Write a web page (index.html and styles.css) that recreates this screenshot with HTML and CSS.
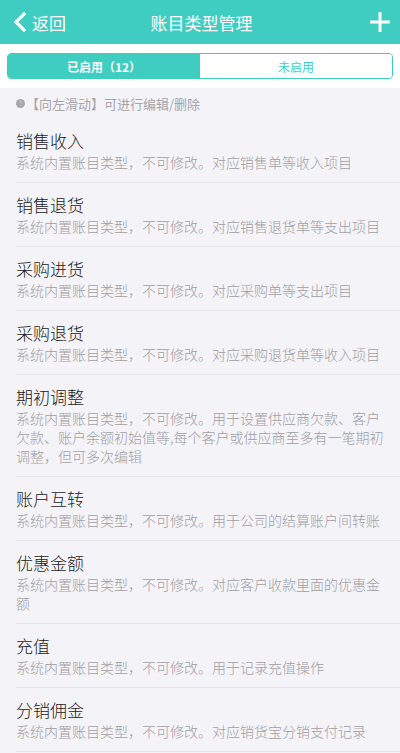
FILE: index.html
```html
<!DOCTYPE html>
<html lang="zh-CN">
<head>
    <meta charset="UTF-8">
    <meta name="viewport" content="width=device-width, initial-scale=1.0">
    <title>账目类型管理</title>
    <link rel="stylesheet" href="styles.css">
</head>
<body>
    <div class="topo">
        <div class="voltar">
            <svg width="14" height="20" viewBox="0 0 14 20"><path d="M11 2 L3 10 L11 18" fill="none" stroke="#fff" stroke-width="3.2" stroke-linecap="square"/></svg>
            <span>返回</span>
        </div>
        <div class="titulo">账目类型管理</div>
        <div class="mais">
            <svg width="20" height="20" viewBox="0 0 20 20"><path d="M10 0 V20 M0 10 H20" stroke="#fff" stroke-width="3"/></svg>
        </div>
    </div>

    <div class="abas-area">
        <div class="abas">
            <div class="aba ativa">已启用（12）</div>
            <div class="aba">未启用</div>
        </div>
    </div>

    <div class="dica">
        <span class="bolinha">?</span>
        <span>【向左滑动】可进行编辑/删除</span>
    </div>

    <div class="lista">
        <div class="item">
            <div class="nome">销售收入</div>
            <div class="desc">系统内置账目类型，不可修改。对应销售单等收入项目</div>
        </div>
        <div class="item">
            <div class="nome">销售退货</div>
            <div class="desc">系统内置账目类型，不可修改。对应销售退货单等支出项目</div>
        </div>
        <div class="item">
            <div class="nome">采购进货</div>
            <div class="desc">系统内置账目类型，不可修改。对应采购单等支出项目</div>
        </div>
        <div class="item">
            <div class="nome">采购退货</div>
            <div class="desc">系统内置账目类型，不可修改。对应采购退货单等收入项目</div>
        </div>
        <div class="item">
            <div class="nome">期初调整</div>
            <div class="desc">系统内置账目类型，不可修改。用于设置供应商欠款、客户欠款、账户余额初始值等,每个客户或供应商至多有一笔期初调整，但可多次编辑</div>
        </div>
        <div class="item">
            <div class="nome">账户互转</div>
            <div class="desc">系统内置账目类型，不可修改。用于公司的结算账户间转账</div>
        </div>
        <div class="item">
            <div class="nome">优惠金额</div>
            <div class="desc">系统内置账目类型，不可修改。对应客户收款里面的优惠金额</div>
        </div>
        <div class="item">
            <div class="nome">充值</div>
            <div class="desc">系统内置账目类型，不可修改。用于记录充值操作</div>
        </div>
        <div class="item">
            <div class="nome">分销佣金</div>
            <div class="desc">系统内置账目类型，不可修改。对应销货宝分销支付记录</div>
        </div>
    </div>
</body>
</html>
```

FILE: styles.css
```css
body {
    margin: 0;
    padding: 0;
    font-family: "Noto Sans CJK SC", "Liberation Sans", sans-serif;
    background: #f4f3f8;
}

/* barra do topo */
.topo {
    height: 44px;
    background: #3ecdc0;
    display: flex;
    align-items: center;
    justify-content: space-between;
    padding: 0 10px 0 13px;
    color: #fff;
}

.voltar {
    display: flex;
    align-items: center;
    gap: 5px;
    width: 80px;
    font-size: 17px;
}

.voltar svg {
    display: block;
}

.titulo {
    font-size: 17px;
}

.mais {
    width: 80px;
    display: flex;
    justify-content: flex-end;
}

.mais svg {
    display: block;
}

/* abas */
.abas-area {
    background: #fff;
    height: 44px;
    padding: 9px 7px 0 7px;
    box-sizing: border-box;
}

.abas {
    display: flex;
    height: 26px;
    border: 1px solid #3ecdc0;
    border-radius: 4px;
    overflow: hidden;
    box-sizing: border-box;
}

.aba {
    flex: 1;
    display: flex;
    align-items: center;
    justify-content: center;
    font-size: 12px;
    color: #3ecdc0;
    background: #fff;
}

.aba.ativa {
    background: #3ecdc0;
    color: #fff;
    font-weight: bold;
}

/* dica */
.dica {
    height: 31px;
    display: flex;
    align-items: center;
    padding-left: 16px;
    font-size: 13px;
    color: #a5a5a8;
}

.bolinha {
    width: 9px;
    height: 9px;
    border-radius: 50%;
    background: #a8a8ab;
    color: #c8c8cb;
    font-size: 7px;
    line-height: 9px;
    text-align: center;
    margin-right: 1px;
}

/* lista */
.item {
    margin-left: 16px;
    padding: 10px 16px 10px 0;
    border-bottom: 1px solid #e6e5ea;
}

.nome {
    font-size: 17px;
    line-height: 24px;
    color: #222;
    font-weight: 300;
}

.desc {
    font-size: 14px;
    line-height: 19px;
    color: #a0a0a3;
    font-weight: 300;
}
```
